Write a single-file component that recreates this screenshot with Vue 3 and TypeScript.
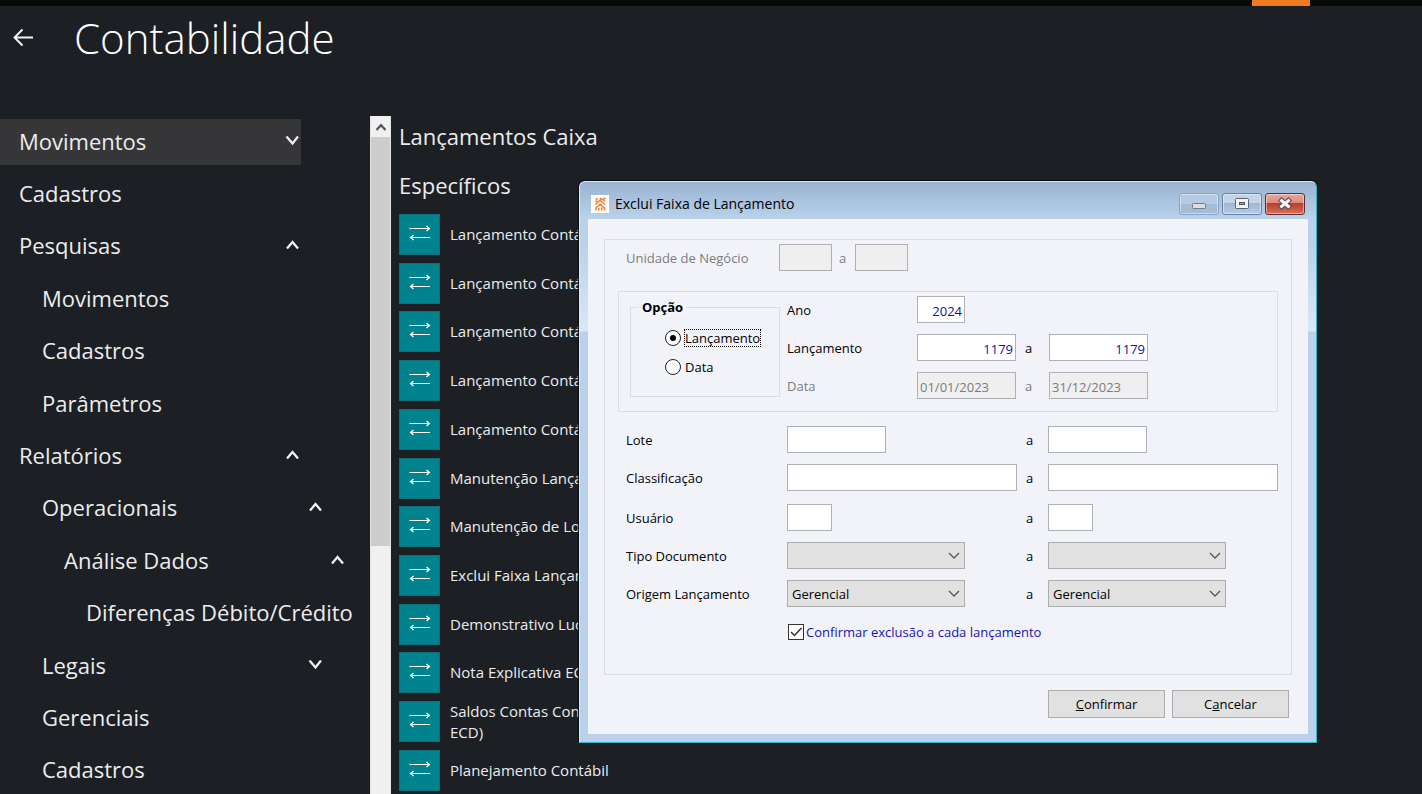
<script setup lang="ts">
import { ref } from 'vue'

interface MenuItem {
  label: string
  level: number
  arrow?: 'up' | 'down'
  active?: boolean
}

const menu: MenuItem[] = [
  { label: 'Movimentos', level: 0, arrow: 'down', active: true },
  { label: 'Cadastros', level: 0 },
  { label: 'Pesquisas', level: 0, arrow: 'up' },
  { label: 'Movimentos', level: 1 },
  { label: 'Cadastros', level: 1 },
  { label: 'Parâmetros', level: 1 },
  { label: 'Relatórios', level: 0, arrow: 'up' },
  { label: 'Operacionais', level: 1, arrow: 'up' },
  { label: 'Análise Dados', level: 2, arrow: 'up' },
  { label: 'Diferenças Débito/Crédito', level: 3 },
  { label: 'Legais', level: 1, arrow: 'down' },
  { label: 'Gerenciais', level: 1 },
  { label: 'Cadastros', level: 1 },
]

const actions: string[] = [
  'Lançamento Contábil',
  'Lançamento Contábil',
  'Lançamento Contábil',
  'Lançamento Contábil',
  'Lançamento Contábil',
  'Manutenção Lançamento',
  'Manutenção de Lote',
  'Exclui Faixa Lançamento',
  'Demonstrativo Lucro',
  'Nota Explicativa ECD',
  'Saldos Contas Contábeis\nECD)',
  'Planejamento Contábil',
]

const option = ref('lancamento')
const year = ref('2024')
const entryFrom = ref('1179')
const entryTo = ref('1179')
const dateFrom = ref('01/01/2023')
const dateTo = ref('31/12/2023')
const originFrom = ref('Gerencial')
const originTo = ref('Gerencial')
const confirmEach = ref(true)
</script>

<template>
  <div class="app">
    <div class="topbar"><span class="topbar-tab"></span></div>

    <header class="header">
      <button class="back" type="button" aria-label="Voltar">
        <svg width="22" height="20" viewBox="0 0 22 20" fill="none" stroke="#f4f4f4" stroke-width="1.900">
          <path d="M21 9.500H2.500M10.500 1.500L2.500 9.500l8 8" />
        </svg>
      </button>
      <h1>Contabilidade</h1>
    </header>

    <div class="body">
      <nav class="menu">
        <a
          v-for="(item, i) in menu"
          :key="i"
          href="#"
          class="menu-item"
          :class="['level-' + item.level, { active: item.active }]"
        >
          <span>{{ item.label }}</span>
          <svg v-if="item.arrow" class="menu-arrow" width="14" height="10" viewBox="0 0 14 10" fill="none" stroke="#f2f2f2" stroke-width="2.300">
            <path v-if="item.arrow === 'down'" d="M1.500 0.500L7.500 7.500 13 0.500" />
            <path v-else d="M2 8.500L7.500 2l5.500 6.500" />
          </svg>
        </a>
      </nav>

      <div class="scrollbar">
        <button class="scroll-up" type="button" aria-label="Rolar para cima">
          <svg width="12" height="8" viewBox="0 0 12 8" fill="none" stroke="#555" stroke-width="2.200">
            <path d="M1.500 7L6 2.200 10.500 7" />
          </svg>
        </button>
        <div class="scroll-thumb"></div>
      </div>

      <main class="content">
        <h2>Lançamentos Caixa</h2>
        <h2>Específicos</h2>
        <ul class="actions">
          <li v-for="(action, i) in actions" :key="i">
            <a href="#" class="action">
              <span class="tile">
                <svg width="22" height="18" viewBox="0 0 22 18" fill="none" stroke="#fff" stroke-width="1.200">
                  <path d="M0.500 4.500H20M17.500 2l3 2.500-3 2.500" />
                  <path d="M21 13.500H2M4.500 11l-3 2.500 3 2.500" />
                </svg>
              </span>
              <span class="action-label">{{ action }}</span>
            </a>
          </li>
        </ul>
      </main>
    </div>

    <section class="dialog" role="dialog" aria-labelledby="dlg-title">
      <div class="titlebar">
        <svg class="app-icon" width="18" height="18" viewBox="0 0 18 18">
          <rect width="18" height="18" fill="#fff" />
          <g fill="none" stroke="#f58034" stroke-width="1.600">
            <path d="M4.500 4H7M4.500 9.500L9 5l5 4.500M9 3.200l2 1.300M11.500 4L14 6.500M12 3.500h2.500M4.500 7L6 5.500" />
            <path d="M5 15.500V13L9 9l4.500 4v2.500M7.800 15.500V13M10.800 15.500V12.500" />
          </g>
        </svg>
        <span id="dlg-title" class="dialog-title">Exclui Faixa de Lançamento</span>
        <div class="window-buttons">
          <button class="win min" type="button" aria-label="Minimizar">
            <svg width="16" height="14" viewBox="0 0 16 14">
              <rect x="1.500" y="6.500" width="13" height="5" rx="1" fill="#ddd" stroke="#777b82" />
            </svg>
          </button>
          <button class="win max" type="button" aria-label="Maximizar">
            <svg width="16" height="14" viewBox="0 0 16 14">
              <rect x="1.500" y="1.500" width="13" height="10" rx="1" fill="#f4f4f4" stroke="#5b6372" />
              <rect x="5.500" y="5.500" width="5" height="2" fill="#8fa6c4" stroke="#4d5566" />
            </svg>
          </button>
          <button class="win close" type="button" aria-label="Fechar">
            <svg width="16" height="14" viewBox="0 0 16 14">
              <path d="M4.500 3.500l7 6M11.500 3.500l-7 6" stroke="#5a4a55" stroke-width="5" stroke-linecap="square" />
              <path d="M4.500 3.500l7 6M11.500 3.500l-7 6" stroke="#f5f5f5" stroke-width="3" stroke-linecap="square" />
            </svg>
          </button>
        </div>
      </div>

      <form class="client" @submit.prevent>
        <div class="panel">
          <div class="unit-row dim">
            <label for="unit-from">Unidade de Negócio</label>
            <input id="unit-from" type="text" disabled />
            <label class="to" for="unit-to">a</label>
            <input id="unit-to" type="text" disabled />
          </div>

          <div class="group">
            <fieldset class="options">
              <legend>Opção</legend>
              <label class="radio">
                <input v-model="option" type="radio" name="option" value="lancamento" />
                <span class="focused">Lançamento</span>
              </label>
              <label class="radio">
                <input v-model="option" type="radio" name="option" value="data" />
                <span>Data</span>
              </label>
            </fieldset>

            <div class="range-grid">
              <label for="year">Ano</label>
              <input id="year" v-model="year" class="num year" type="text" />
              <span></span>
              <span></span>

              <label for="entry-from">Lançamento</label>
              <input id="entry-from" v-model="entryFrom" class="num" type="text" />
              <label class="to" for="entry-to">a</label>
              <input id="entry-to" v-model="entryTo" class="num" type="text" />

              <label class="dim" for="date-from">Data</label>
              <input id="date-from" v-model="dateFrom" type="text" disabled />
              <label class="to dim" for="date-to">a</label>
              <input id="date-to" v-model="dateTo" type="text" disabled />
            </div>
          </div>

          <div class="filter-grid">
            <label for="lot-from">Lote</label>
            <input id="lot-from" class="medium" type="text" />
            <label class="to" for="lot-to">a</label>
            <input id="lot-to" class="medium" type="text" />

            <label for="class-from">Classificação</label>
            <input id="class-from" type="text" />
            <label class="to" for="class-to">a</label>
            <input id="class-to" type="text" />
          </div>

          <div class="filter-grid">
            <label for="user-from">Usuário</label>
            <input id="user-from" class="short" type="text" />
            <label class="to" for="user-to">a</label>
            <input id="user-to" class="short" type="text" />

            <label for="type-from">Tipo Documento</label>
            <span class="select">
              <select id="type-from"><option></option></select>
              <svg width="12" height="8" viewBox="0 0 12 8" fill="none" stroke="#555" stroke-width="1.300"><path d="M1 1l5 5 5-5" /></svg>
            </span>
            <label class="to" for="type-to">a</label>
            <span class="select">
              <select id="type-to"><option></option></select>
              <svg width="12" height="8" viewBox="0 0 12 8" fill="none" stroke="#555" stroke-width="1.300"><path d="M1 1l5 5 5-5" /></svg>
            </span>

            <label for="origin-from">Origem Lançamento</label>
            <span class="select">
              <select id="origin-from" v-model="originFrom"><option>Gerencial</option></select>
              <svg width="12" height="8" viewBox="0 0 12 8" fill="none" stroke="#555" stroke-width="1.300"><path d="M1 1l5 5 5-5" /></svg>
            </span>
            <label class="to" for="origin-to">a</label>
            <span class="select">
              <select id="origin-to" v-model="originTo"><option>Gerencial</option></select>
              <svg width="12" height="8" viewBox="0 0 12 8" fill="none" stroke="#555" stroke-width="1.300"><path d="M1 1l5 5 5-5" /></svg>
            </span>
          </div>

          <label class="check">
            <span class="check-box">
              <input v-model="confirmEach" type="checkbox" />
              <svg v-if="confirmEach" width="16" height="16" viewBox="0 0 16 16" fill="none" stroke="#333" stroke-width="1.500"><path d="M3 8l3.500 3.500L13.500 4" /></svg>
            </span>
            <span>Confirmar exclusão a cada lançamento</span>
          </label>
        </div>

        <div class="buttons">
          <button type="submit"><u>C</u>onfirmar</button>
          <button type="button">C<u>a</u>ncelar</button>
        </div>
      </form>
    </section>
  </div>
</template>

<style>
body {
  margin: 0;
  background: #1c1f24;
}
</style>

<style scoped>
.app {
  position: relative;
  display: flex;
  flex-direction: column;
  height: 100vh;
  overflow: hidden;
  background: #1c1f24;
  color: #ececec;
  font-family: "Open Sans", "Noto Sans", sans-serif;
  box-sizing: border-box;
}
.app *,
.app *::before {
  box-sizing: border-box;
}
.topbar {
  display: flex;
  justify-content: flex-end;
  flex: none;
  height: 6px;
  padding-right: 112px;
  background: #080808;
}
.topbar-tab {
  width: 58px;
  background: #f07a20;
}
.header {
  display: flex;
  align-items: center;
  gap: 40px;
  flex: none;
  height: 64px;
  padding-left: 12px;
}
.back {
  display: flex;
  width: 22px;
  padding: 0;
  border: 0;
  background: none;
}
h1 {
  margin: 0;
  font-size: 42px;
  line-height: 64px;
  font-weight: 300;
  color: #fff;
}
.body {
  display: flex;
  flex: 1;
  min-height: 0;
  padding-top: 46px;
}
.menu {
  display: flex;
  flex-direction: column;
  justify-content: space-between;
  flex: none;
  width: 370px;
  padding-top: 3px;
}
.menu-item {
  display: flex;
  align-items: center;
  justify-content: space-between;
  width: 301px;
  height: 46px;
  padding: 0 2px 3px 19px;
  font-size: 22px;
  line-height: 32px;
  white-space: nowrap;
  color: #ececec;
  text-decoration: none;
}
.menu-item.active {
  background: #363638;
}
.level-1 {
  margin-left: 23px;
}
.level-2 {
  margin-left: 45px;
}
.level-3 {
  margin-left: 67px;
}
.scrollbar {
  display: flex;
  flex-direction: column;
  flex: none;
  width: 21px;
  background: #f0f0f0;
  border: solid #e4e4e4;
  border-width: 0 1px;
}
.scroll-up {
  display: flex;
  align-items: center;
  justify-content: center;
  height: 21px;
  padding: 0;
  border: 0;
  background: #f0f0f0;
}
.scroll-thumb {
  height: 409px;
  background: #cdcdcd;
}
.content {
  display: flex;
  flex-direction: column;
  flex: 1;
  padding: 0 0 3px 8px;
}
h2 {
  margin: 0;
  height: 49px;
  font-size: 22px;
  line-height: 40px;
  font-weight: 400;
}
.actions {
  display: flex;
  flex-direction: column;
  justify-content: space-between;
  flex: 1;
  margin: 0;
  padding: 0;
  list-style: none;
}
.action {
  display: flex;
  align-items: center;
  gap: 10px;
  height: 41px;
  color: #ececec;
  text-decoration: none;
}
.tile {
  display: flex;
  align-items: center;
  justify-content: center;
  width: 41px;
  height: 41px;
  padding-bottom: 3px;
  background: #00838f;
  border: 1px solid #0f6f79;
}
.action-label {
  font-size: 15px;
  line-height: 21px;
  white-space: pre;
}

.dialog {
  position: absolute;
  left: 579px;
  top: 181px;
  width: 738px;
  padding: 0 8px 8px;
  border: 1px solid #dfe8f0;
  border-right-color: #2fb5c8;
  border-bottom-color: #2fb5c8;
  border-radius: 6px 6px 0 0;
  background: linear-gradient(#99b4d1 0, #b9d1ea 36px, #b9d1ea 60px, #dbe7f5 149px, #b9d1ea 150px);
  box-shadow: 0 0 1px 1px #0c0d10;
  color: #000;
  font-size: 13px;
  line-height: 18px;
}
.titlebar {
  display: flex;
  align-items: center;
  height: 37px;
  padding: 7px 3px 0 3px;
}
.app-icon {
  flex: none;
}
.dialog-title {
  flex: 1;
  padding-left: 6px;
  font-size: 14px;
}
.window-buttons {
  display: flex;
  gap: 3px;
}
.win {
  display: flex;
  align-items: center;
  justify-content: center;
  width: 40px;
  height: 22px;
  padding: 0;
  border: 1px solid #6a7f9d;
  border-radius: 3px;
  box-shadow: inset 0 0 0 1px rgba(255, 255, 255, 0.45);
}
.min {
  border-color: #8ba3c0;
  background: linear-gradient(#b4cae2 50%, #a3bdd9 50%);
}
.max {
  background: linear-gradient(#c3d3e8 45%, #9bb5d3 45%, #b4cee8);
}
.close {
  border-color: #5e2a38;
  background: linear-gradient(#e8a79c, #dd8a7c 45%, #b8392a 45%, #d5715a);
}
.client {
  display: flex;
  flex-direction: column;
  padding: 20px 16px 16px;
  background: #f2f3f9;
}
.panel {
  height: 436px;
  padding: 4px 13px 0;
  border: 1px solid #dcdde0;
}
.unit-row {
  display: grid;
  grid-template-columns: 153px 53px 23px 53px;
  align-items: center;
  padding-left: 8px;
}
.dim {
  color: #7b7b7f;
}
.to {
  padding-left: 9px;
}
.unit-row .to {
  padding-left: 7px;
}
input[type='text'] {
  width: 100%;
  height: 27px;
  padding: 2px 2px 0;
  border: 1px solid #adb0b8;
  border-radius: 0;
  background: #fff;
  font: inherit;
  color: #1010a8;
}
input[type='text']:disabled {
  background: #efefef;
  color: #7b7b7f;
}
input.num {
  text-align: right;
}
input.year {
  width: 48px;
}
input.medium {
  width: 99px;
}
input.short {
  width: 45px;
}
.group {
  display: grid;
  grid-template-columns: 150px 1fr;
  column-gap: 7px;
  height: 121px;
  margin-top: 20px;
  padding: 4px 0 0 11px;
  border: 1px solid #dcdde0;
}
.options {
  min-width: 0;
  height: 101px;
  margin: 0;
  padding: 12px 0 0 34px;
  border: 1px solid #dcdde0;
}
.options legend {
  margin-left: -26px;
  padding: 0 3px;
  font-weight: 700;
  line-height: 22px;
}
.radio {
  display: flex;
  align-items: center;
  gap: 4px;
  height: 16px;
  margin-bottom: 13px;
}
.radio input {
  display: grid;
  place-items: center;
  appearance: none;
  width: 16px;
  height: 16px;
  margin: 0;
  border: 1px solid #222;
  border-radius: 50%;
  background: #fff;
}
.radio input:checked::before {
  content: '';
  width: 6px;
  height: 6px;
  border-radius: 50%;
  background: #000;
}
.radio .focused {
  outline: 1px dotted #000;
  line-height: 16px;
}
.range-grid {
  display: grid;
  grid-template-columns: 130px 99px 33px 99px;
  grid-auto-rows: 27px;
  row-gap: 11px;
  align-items: center;
}
.filter-grid {
  display: grid;
  grid-template-columns: 161px 230px 31px 230px;
  grid-auto-rows: 27px;
  row-gap: 11px;
  align-items: center;
  margin-top: 13px;
  padding-left: 8px;
}
.group + .filter-grid {
  margin-top: 14px;
}
.select {
  position: relative;
  width: 178px;
  height: 27px;
}
.select select {
  appearance: none;
  width: 100%;
  height: 100%;
  padding: 0 24px 0 4px;
  border: 1px solid #adadad;
  border-radius: 0;
  background: #e1e1e1;
  font: inherit;
  color: #000;
}
.select svg {
  position: absolute;
  right: 5px;
  top: 10px;
  pointer-events: none;
}
.check {
  display: flex;
  align-items: center;
  gap: 2px;
  width: max-content;
  margin: 16px 0 0 170px;
  color: #1414b4;
}
.check-box {
  position: relative;
  width: 16px;
  height: 16px;
}
.check-box input {
  appearance: none;
  display: block;
  width: 16px;
  height: 16px;
  margin: 0;
  border: 1px solid #333;
  background: #fff;
}
.check-box svg {
  position: absolute;
  inset: 0;
  pointer-events: none;
}
.buttons {
  display: flex;
  justify-content: flex-end;
  gap: 7px;
  margin-top: 15px;
  padding-right: 3px;
}
.buttons button {
  width: 117px;
  height: 28px;
  padding: 0;
  border: 1px solid #adadad;
  background: #e1e1e1;
  font: inherit;
  color: #000;
}
</style>
